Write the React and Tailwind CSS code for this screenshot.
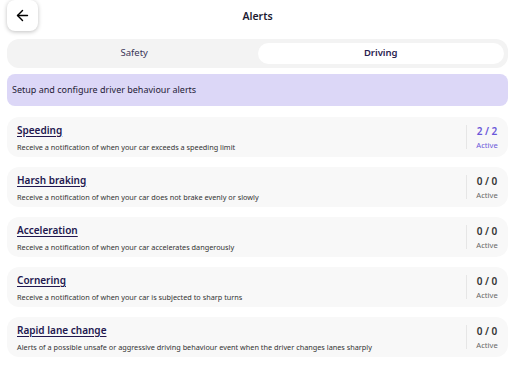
import { ArrowLeft } from 'lucide-react';

const alerts = [
  { title: 'Speeding', desc: 'Receive a notification of when your car exceeds a speeding limit', count: '2 / 2', on: true },
  { title: 'Harsh braking', desc: 'Receive a notification of when your car does not brake evenly or slowly', count: '0 / 0' },
  { title: 'Acceleration', desc: 'Receive a notification of when your car accelerates dangerously', count: '0 / 0' },
  { title: 'Cornering', desc: 'Receive a notification of when your car is subjected to sharp turns', count: '0 / 0' },
  { title: 'Rapid lane change', desc: 'Alerts of a possible unsafe or aggressive driving behaviour event when the driver changes lanes sharply', count: '0 / 0' },
];

export default function App() {
  return (
    <div className="w-[515px] h-[372px] bg-white overflow-hidden px-[7px] font-['Noto_Sans',sans-serif]">
      {/* Header */}
      <div className="relative h-[32px] flex items-center justify-center">
        <button className="absolute left-0 top-0 w-[31px] h-[31px] rounded-lg bg-white shadow-[0_1px_4px_rgba(0,0,0,0.25)] flex items-center justify-center text-black">
          <ArrowLeft size={17} strokeWidth={2} />
        </button>
        <div className="text-[10.5px] font-semibold text-[#1c1b33] mt-[1px]">Alerts</div>
      </div>

      {/* Tabs */}
      <div className="mt-[7px] h-[29px] rounded-xl bg-[#f3f3f3] flex items-center p-[4px]">
        <div className="flex-1 h-full flex items-center justify-center text-[9.5px] text-[#3a3458]">Safety</div>
        <div className="flex-1 h-full flex items-center justify-center rounded-full bg-white text-[9.5px] font-semibold text-[#2a2250]">Driving</div>
      </div>

      {/* Banner */}
      <div className="mt-[6px] h-[32px] rounded-lg bg-[#dcd7f7] flex items-center px-[5px] text-[9px] text-[#1f1b36]">
        Setup and configure driver behaviour alerts
      </div>

      {/* Cards */}
      <div className="mt-[11px] flex flex-col gap-[10px]">
        {alerts.map((a) => (
          <div key={a.title} className="h-[40px] rounded-xl bg-[#f8f8f8] flex items-center pl-[10px] pr-[10px]">
            <div className="flex-1 min-w-0">
              <div className="text-[10px] font-semibold text-[#22174f] underline underline-offset-2 leading-[14px]">{a.title}</div>
              <div className="mt-[5px] text-[7.3px] text-[#333] leading-[10px]">{a.desc}</div>
            </div>
            <div className="h-[24px] w-px bg-[#e6e6e6] mr-[9px]" />
            <div className={`w-[22px] flex flex-col items-center ${a.on ? 'text-[#6a57d9]' : 'text-[#333]'}`}>
              <div className="text-[10px] font-semibold leading-[13px] whitespace-nowrap">{a.count}</div>
              <div className={`text-[7.6px] leading-[10px] mt-[2px] ${a.on ? 'text-[#6a57d9]' : 'text-[#666]'}`}>Active</div>
            </div>
          </div>
        ))}
      </div>
    </div>
  );
}
